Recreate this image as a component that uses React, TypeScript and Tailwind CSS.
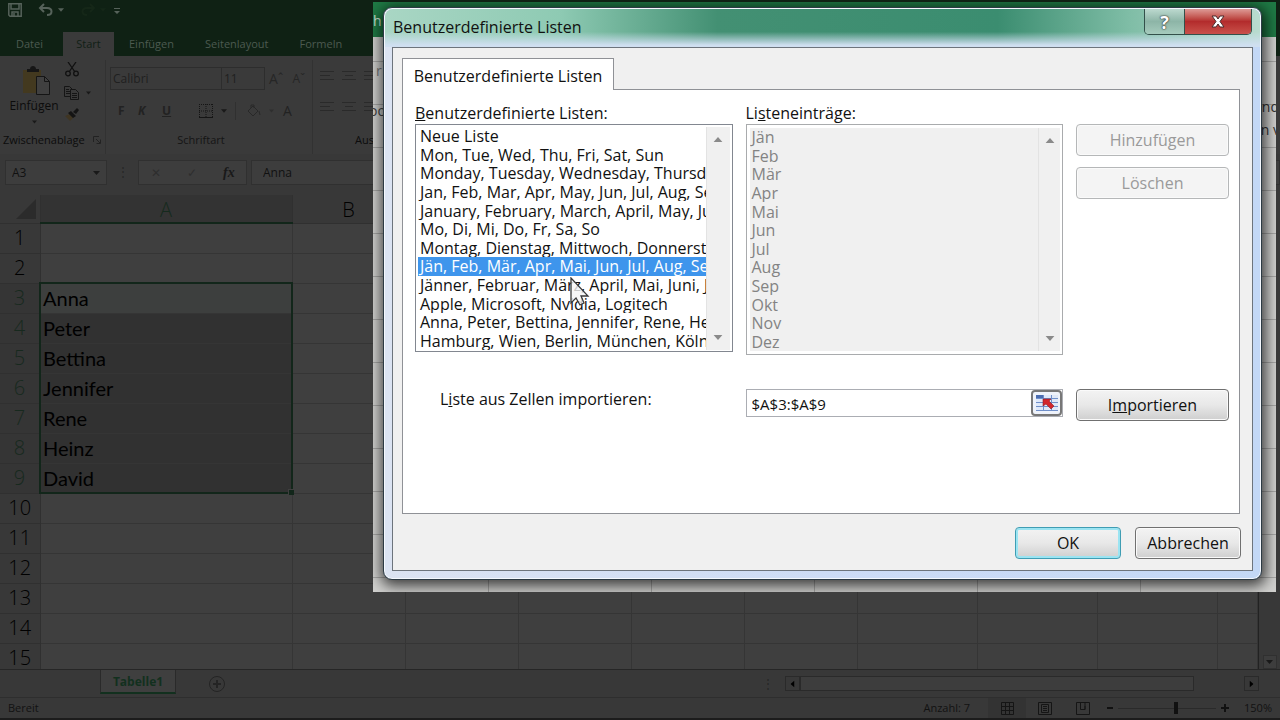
import { ReactNode } from "react";
import { twMerge } from "tailwind-merge";

const TABS = ["Einfügen", "Seitenlayout", "Formeln"];
// only the first two columns stay clear of the dialog
const COLUMNS = ["A", "B", "", "", "", "", "", "", "", ""];
const NAMES: Record<number, string> = {
  3: "Anna",
  4: "Peter",
  5: "Bettina",
  6: "Jennifer",
  7: "Rene",
  8: "Heinz",
  9: "David",
};
const LISTS = [
  "Neue Liste",
  "Mon, Tue, Wed, Thu, Fri, Sat, Sun",
  "Monday, Tuesday, Wednesday, Thursday",
  "Jan, Feb, Mar, Apr, May, Jun, Jul, Aug, Sep",
  "January, February, March, April, May, June",
  "Mo, Di, Mi, Do, Fr, Sa, So",
  "Montag, Dienstag, Mittwoch, Donnerstag",
  "Jän, Feb, Mär, Apr, Mai, Jun, Jul, Aug, Sep",
  "Jänner, Februar, März, April, Mai, Juni, Juli",
  "Apple, Microsoft, Nvidia, Logitech",
  "Anna, Peter, Bettina, Jennifer, Rene, Heinz",
  "Hamburg, Wien, Berlin, München, Köln",
];
const ENTRIES = ["Jän", "Feb", "Mär", "Apr", "Mai", "Jun", "Jul", "Aug", "Sep", "Okt", "Nov", "Dez"];

const Caret = ({ className }: { className?: string }) => (
  <svg viewBox="0 0 7 4" className={twMerge("h-1 w-[7px] fill-[#191919]", className)}>
    <path d="M0 0h7L3.5 4z" />
  </svg>
);

const TitleBar = () => (
  <div className="flex h-8 items-start gap-4 bg-[#0f2114] pl-2 pt-[3px] text-[#56625a]">
    <button aria-label="Speichern">
      <svg viewBox="0 0 14 14" className="h-[14px] w-[14px]" fill="none" stroke="currentColor" strokeWidth="1.5">
        <path d="M.8.8h12.4v12.4H2L.8 12zM3 1v5h8V1M4 13V9h6v4M6 10v3" />
      </svg>
    </button>
    <button aria-label="Rückgängig" className="flex items-center gap-1">
      <svg viewBox="0 0 16 14" className="h-[14px] w-4" fill="none" stroke="currentColor" strokeWidth="2">
        <path d="M2 5h7c6 0 6 7 0 7M6 1L2 5l4 4" />
      </svg>
      <Caret className="w-[6px] fill-[#56625a]" />
    </button>
    <button aria-label="Wiederholen" className="flex items-center gap-1 text-[#152718]">
      <svg viewBox="0 0 16 14" className="h-[14px] w-4" fill="none" stroke="currentColor" strokeWidth="2">
        <path d="M14 5H7c-6 0-6 7 0 7M10 1l4 4-4 4" />
      </svg>
      <Caret className="w-[6px] fill-[#152718]" />
    </button>
    <button aria-label="Symbolleiste anpassen" className="-ml-2 pt-[5px]">
      <svg viewBox="0 0 6 7" className="h-[7px] w-[6px]" fill="currentColor">
        <path d="M0 0h6v1H0zM0 3h6L3 6z" />
      </svg>
    </button>
  </div>
);

const RibbonTabs = () => (
  <nav className="flex h-6 items-center bg-[#0f2114] text-[11px] text-[#4c5a50]">
    <button className="w-[63px] pr-1">Datei</button>
    <button className="mr-[15px] h-6 w-[51px] bg-[#3a3a3a] text-[#111f16]">Start</button>
    {TABS.map((tab) => (
      <button key={tab} className="mr-[31px]">
        {tab}
      </button>
    ))}
  </nav>
);

const AlignIcon = ({ short }: { short?: boolean }) => (
  <svg viewBox="0 0 14 12" className="h-3 w-[14px]" stroke="#2a2a2a">
    <path d={short ? "M0 1.5h14M3 5.5h8M0 9.5h14" : "M0 1.5h14M0 5.5h10M0 9.5h14"} />
  </svg>
);

const Ribbon = () => (
  <section className="flex h-[98px] bg-[#3a3a3a] pt-1 text-[11px] text-[#0c0c0c]">
    <div className="flex w-[106px] flex-col justify-between border-r border-[#323232] pb-[6px]">
      <div className="flex">
        <button className="flex w-16 flex-col items-center pl-1 pt-1">
          <svg viewBox="0 0 30 32" className="ml-1 h-8 w-[30px]">
            <path d="M2 6h18v23H2z" fill="#43391f" />
            <path d="M6 8V5h3c0-4 6-4 6 0h3v3z" fill="#161616" />
            <path d="M15.5 12.5h8l5 5v13h-13z" fill="#404040" stroke="#151515" />
            <path d="M23.5 12.5v5h5" fill="none" stroke="#151515" />
          </svg>
          <span className="mt-[2px] text-xs leading-4">Einfügen</span>
          <Caret className="mt-[6px] w-[5px]" />
        </button>
        <div className="flex flex-col items-start gap-2">
          <button aria-label="Ausschneiden" className="pl-px pt-[2px]">
            <svg viewBox="0 0 14 15" className="h-[15px] w-[14px]" fill="none" stroke="#111" strokeWidth="1.3">
              <path d="M3 0l7 10M11 0L4 10" />
              <circle cx="3" cy="11.5" r="2.3" />
              <circle cx="11" cy="11.5" r="2.3" />
            </svg>
          </button>
          <button aria-label="Kopieren" className="flex items-center gap-[6px] pt-px">
            <svg viewBox="0 0 16 14" className="h-[14px] w-4" fill="#3a3a3a" stroke="#151515">
              <path d="M.5.5h5l3 3v7h-8zM2 3.5h3M2 5.5h4M2 7.5h4" />
              <path d="M6.5 3.5h5l3 3v7h-8zM8 7.5h5M8 9.5h5M8 11.5h5" />
            </svg>
            <Caret className="w-[5px]" />
          </button>
          <button aria-label="Format übertragen">
            <svg viewBox="0 0 15 13" className="h-[13px] w-[15px]">
              <path d="M1 8l5-2 4 3-4 4z" fill="#3f3522" />
              <path d="M4 5l3-2 5 5-3 2zM9 4l4-4 2 2-3 4z" fill="#141414" />
            </svg>
          </button>
        </div>
      </div>
      <div className="flex items-center justify-between pl-[3px] pr-1">
        Zwischenablage
        <svg viewBox="0 0 8 8" className="h-2 w-2" fill="none" stroke="#222">
          <path d="M.5 6V.5H6M3 3l4 4M7.5 3.5v4h-4" />
        </svg>
      </div>
    </div>
    <div className="flex w-[207px] flex-col justify-between border-r border-[#323232] pb-[6px] pl-1">
      <div className="mt-[7px] flex items-center text-[#202020]">
        <input
          aria-label="Schriftart"
          defaultValue="Calibri"
          className="h-[23px] w-[112px] border border-[#2d2d2d] bg-transparent pl-[2px] text-xs"
        />
        <input
          aria-label="Schriftgrad"
          defaultValue="11"
          className="h-[23px] w-[43px] border border-l-0 border-[#2d2d2d] bg-transparent pl-[2px] text-xs"
        />
        <button className="ml-1 text-sm leading-4 text-[#262626]">Aˆ</button>
        <button className="ml-[9px] text-xs leading-4 text-[#262626]">Aˇ</button>
      </div>
      <div className="flex items-center pl-2 text-xs text-[#222]">
        <button className="w-5 text-left font-bold">F</button>
        <button className="w-6 text-left font-bold italic">K</button>
        <button className="w-[37px] text-left font-bold underline">U</button>
        <button aria-label="Rahmen" className="flex items-center gap-2">
          <svg viewBox="0 0 14 14" className="h-[14px] w-[14px]" fill="none" stroke="#151515">
            <path d="M.5 0v13M13.5 0v13M7 0v13M0 .5h14M0 7h14" strokeDasharray="1 1" />
            <path d="M0 13.5h14" />
          </svg>
          <Caret className="w-[6px]" />
        </button>
        <button aria-label="Füllfarbe" className="ml-2 flex h-[18px] items-center gap-2 border-l border-[#303030] pl-[11px]">
          <svg viewBox="0 0 14 13" className="h-[13px] w-[14px]" fill="none" stroke="#282828">
            <path d="M1 7l5-5 5 5-5 5zM4 4V1h3v3M12 7l1 4" />
          </svg>
          <Caret className="w-[5px] fill-[#2e2e2e]" />
        </button>
        <button className="ml-[9px] text-sm leading-4">A</button>
      </div>
      <div className="pr-5 text-center text-[#151515]">Schriftart</div>
    </div>
    <div className="flex flex-col justify-between pb-[6px] pl-[7px]">
      <div className="mt-[10px] flex gap-2">
        <AlignIcon />
        <AlignIcon short />
        <AlignIcon />
      </div>
      <div className="flex gap-2">
        <AlignIcon />
        <AlignIcon short />
        <AlignIcon />
      </div>
      <div className="pl-[35px]">Ausrichtung</div>
    </div>
  </section>
);

const FormulaBar = () => (
  <div className="flex h-[41px] items-start bg-[#383838] pl-[5px] pt-[6px] text-xs text-[#111]">
    <div className="flex h-[25px] w-[102px] items-center border border-[#303030] bg-[#3d3d3d] pl-[6px] pr-[6px]">
      <input aria-label="Namenfeld" defaultValue="A3" className="w-full min-w-0 bg-transparent outline-none" />
      <Caret className="shrink-0" />
    </div>
    <span className="w-[31px] pt-1 text-center text-[#262626]">⋮</span>
    <div className="flex h-[25px] w-[109px] items-center border border-[#303030] bg-[#3d3d3d]">
      <button aria-label="Abbrechen" className="ml-3 text-[#2e2e2e]">✕</button>
      <button aria-label="Eingeben" className="ml-[26px] text-[#2e2e2e]">✓</button>
      <button className="ml-[26px] font-['Liberation_Serif',serif] text-sm font-bold italic text-[#191919]">fx</button>
    </div>
    <input
      aria-label="Bearbeitungsleiste"
      defaultValue="Anna"
      className="ml-1 h-[25px] flex-1 border border-[#303030] bg-[#3d3d3d] pl-[11px]"
    />
  </div>
);

const Sheet = () => (
  <div className="flex min-h-0 flex-1 bg-[#383838]">
    <div className="min-w-0 flex-1 overflow-hidden border-r border-[#222]">
      <table className="w-full table-fixed border-collapse text-xl">
        <colgroup>
          <col className="w-10" />
          <col className="w-[252px]" />
          <col className="w-[113px]" />
          <col className="w-[113px]" />
          <col className="w-[113px]" />
          <col className="w-[113px]" />
          <col className="w-[113px]" />
          <col className="w-[120px]" />
          <col className="w-[120px]" />
          <col className="w-[120px]" />
          <col />
        </colgroup>
        <thead>
          <tr className="h-7 leading-6">
            <th className="border-b border-r border-[#303030] p-0">
              <svg viewBox="0 0 20 20" className="ml-4 h-5 w-5 fill-[#2b2b2b]">
                <path d="M20 0v20H0z" />
              </svg>
            </th>
            {COLUMNS.map((col, i) => (
              <th
                key={i}
                className={twMerge(
                  "border-b border-r border-[#303030] p-0 pt-[3px] font-light text-black",
                  col === "A" && "border-b-2 border-b-[#12261a] bg-[#333] text-[#152a1d]"
                )}
              >
                {col}
              </th>
            ))}
          </tr>
        </thead>
        <tbody>
          {Array.from({ length: 15 }, (_, i) => i + 1).map((row) => {
            const selected = row >= 3 && row <= 9;
            return (
              <tr key={row} className="h-[30px] leading-7">
                <th
                  className={twMerge(
                    "border-b border-r border-[#303030] p-0 font-light text-black",
                    selected && "border-r-2 border-r-[#12261a] bg-[#353535] text-[#17291e]"
                  )}
                >
                  {row}
                </th>
                {COLUMNS.map((col, i) => (
                  <td
                    key={i}
                    className={twMerge(
                      "border-b border-r border-[#353535] bg-[#3f3f3f] p-0 font-[Lato,'Liberation_Sans',sans-serif] text-black",
                      col === "A" && selected && "relative border-r-2 border-r-[#12261a] bg-[#313131] pl-[2px]",
                      col === "A" && row === 2 && "border-b-2 border-b-[#12261a]",
                      col === "A" && row === 3 && "bg-[#3d3f3e]",
                      col === "A" && row === 9 && "border-b-2 border-b-[#12261a]"
                    )}
                  >
                    {col === "A" && NAMES[row]}
                    {col === "A" && row === 9 && (
                      <span className="absolute -bottom-[3px] -right-[3px] h-[6px] w-[6px] border-l border-t border-[#3f3f3f] bg-[#12261a]" />
                    )}
                  </td>
                ))}
              </tr>
            );
          })}
        </tbody>
      </table>
    </div>
    <div className="flex w-[21px] flex-col items-center justify-end">
      <button aria-label="Nach unten" className="flex h-[14px] w-[14px] items-center justify-center border border-[#303030] bg-[#3d3d3d]">
        <Caret />
      </button>
    </div>
  </div>
);

const SheetTabs = () => (
  <div className="flex h-7 items-center border-t border-[#262626] bg-[#383838]">
    <button className="ml-[100px] h-6 w-[76px] self-start border-x border-b-2 border-[#2a2a2a] border-b-[#12301e] bg-[#3f3f3f] pt-[2px] text-xs font-bold text-[#12301e]">
      Tabelle1
    </button>
    <button aria-label="Neues Blatt" className="ml-8">
      <svg viewBox="0 0 18 18" className="h-[18px] w-[18px]" fill="none" stroke="#242424">
        <circle cx="9" cy="9" r="7.5" />
        <path d="M9 5v8M5 9h8" strokeWidth="2" />
      </svg>
    </button>
    <span className="ml-auto mr-[11px] text-xs text-[#262626]">⋮</span>
    <div className="mr-[21px] flex h-[15px] w-[474px]">
      <button aria-label="Nach links" className="flex w-[15px] items-center justify-center border border-[#2a2a2a]">
        <Caret className="rotate-90 fill-black" />
      </button>
      <div className="w-[394px] border border-[#2a2a2a] bg-[#3d3d3d]" />
      <button aria-label="Nach rechts" className="ml-auto flex w-[15px] items-center justify-center border border-[#2a2a2a]">
        <Caret className="-rotate-90 fill-black" />
      </button>
    </div>
  </div>
);

const StatusBar = () => (
  <footer className="flex h-[23px] items-center border-b-2 border-t border-b-[#1c1c1c] border-t-[#2e2e2e] bg-[#383838] px-2 text-[11px] text-[#121212]">
    <span>Bereit</span>
    <span className="ml-auto mr-[18px]">Anzahl: 7</span>
    <button aria-label="Normal" className="flex h-full w-[38px] items-center justify-center bg-[#333]">
      <svg viewBox="0 0 13 13" className="h-[13px] w-[13px]" fill="none" stroke="#151515">
        <path d="M.5.5h12v12H.5zM4.5 0v13M8.5 0v13M0 4.5h13M0 8.5h13" />
      </svg>
    </button>
    <button aria-label="Seitenlayout" className="flex w-[38px] justify-center">
      <svg viewBox="0 0 14 13" className="h-[13px] w-[14px]" fill="none" stroke="#151515">
        <path d="M.5.5h13v12H.5zM3.5 2.5h7v8h-7zM5 4.5h4M5 6.5h4M5 8.5h4" />
      </svg>
    </button>
    <button aria-label="Umbruchvorschau" className="flex w-[38px] justify-center">
      <svg viewBox="0 0 14 13" className="h-[13px] w-[14px]" fill="none" stroke="#151515">
        <path d="M.5.5h13v12H.5zM4.5 0v7.5H9V0M9 7.5V4" />
      </svg>
    </button>
    <button aria-label="Verkleinern" className="ml-[5px] h-[2px] w-[6px] bg-[#111]" />
    <input
      type="range"
      aria-label="Zoom"
      defaultValue={60}
      className="mx-[5px] h-3 w-[98px] appearance-none bg-[linear-gradient(#2a2a2a,#2a2a2a)] bg-[length:100%_1px] bg-center bg-no-repeat [&::-webkit-slider-thumb]:h-3 [&::-webkit-slider-thumb]:w-1 [&::-webkit-slider-thumb]:appearance-none [&::-webkit-slider-thumb]:bg-[#111]"
    />
    <button aria-label="Vergrößern">
      <svg viewBox="0 0 8 8" className="h-2 w-2" stroke="#111" strokeWidth="2">
        <path d="M4 0v8M0 4h8" />
      </svg>
    </button>
    <span className="ml-[15px]">150%</span>
  </footer>
);

interface IDialogButtonProps {
  children: ReactNode;
  className?: string;
  disabled?: boolean;
}

const DialogButton = ({ children, className, disabled }: IDialogButtonProps) => (
  <button
    disabled={disabled}
    className={twMerge(
      "h-8 rounded-[4px] border border-[#707070] bg-linear-to-b from-[#f3f3f3] via-[#e8e8e8] via-50% to-[#cfcfcf] shadow-[inset_0_0_0_1px_#fafafa]",
      disabled && "border-[#b5b7b8] bg-[#f4f4f4] bg-none text-[#9a9a9a]",
      className
    )}
  >
    {children}
  </button>
);

interface IListBoxProps {
  items: string[];
  labelledBy: string;
  selected?: number;
  disabled?: boolean;
}

const ListBox = ({ items, labelledBy, selected, disabled }: IListBoxProps) => (
  <div
    className={twMerge(
      "flex border border-[#828790] bg-white p-[2px] pb-px",
      disabled && "border-[#a9abad] p-[3px] pr-[2px]"
    )}
  >
    <ul
      role="listbox"
      aria-labelledby={labelledBy}
      aria-disabled={disabled}
      className={twMerge(
        "grid h-[223px] min-w-0 flex-1 grid-cols-1 grid-rows-12 overflow-hidden",
        disabled && "bg-[#f0f0f0] text-[#838383]"
      )}
    >
      {items.map((item, i) => (
        <li
          key={item}
          role="option"
          aria-selected={i === selected}
          className={twMerge(
            "flex min-h-0 items-center overflow-hidden whitespace-nowrap pl-[2px] leading-[18px]",
            i === selected && "bg-[#3e95ec] text-white"
          )}
        >
          {item}
        </li>
      ))}
    </ul>
    <div
      className={twMerge(
        "flex w-6 flex-col items-center justify-between border-l border-[#e3e3e3] bg-[#f0f0f0] py-[10px]",
        disabled && "w-[22px]"
      )}
    >
      <Caret className="h-[5px] w-[10px] rotate-180 fill-[#8a8a8a]" />
      <Caret className="h-[5px] w-[10px] fill-[#8a8a8a]" />
    </div>
  </div>
);

const Pointer = () => (
  <svg viewBox="0 0 20 29" className="pointer-events-none absolute left-[186px] top-[269px] h-[29px] w-5">
    <path d="M1 1v25l5-5 4 7 4-2-3-7h7z" fill="#f5f5f5" fillOpacity=".8" stroke="#3a3a3a" strokeWidth="1.3" />
  </svg>
);

const Dialog = () => (
  <div
    role="dialog"
    aria-labelledby="dialog-title"
    className="relative flex flex-col rounded-[9px] border border-[#2c3a44] bg-[#c9daf3] bg-linear-to-r from-[#dbe3f2] via-[#cddcf5] to-[#c3d8f6] px-2 pb-2 text-base text-[#111] shadow-[inset_0_0_0_1px_#f4f8fd,1px_3px_14px_3px_rgba(0,0,0,0.7)]"
  >
    <header className="-mx-[7px] mt-px flex h-[38px] items-start rounded-t-[8px] bg-[linear-gradient(to_bottom,transparent_60%,#cfdff0_95%),linear-gradient(to_right,#a9d6c4,#8ecab3_20%,#439073_38%,#3b8d70_70%,#7fbda6_85%,#b9dccf)] pl-2 pr-2">
      <h1 id="dialog-title" className="flex-1 pt-2 leading-5">
        Benutzerdefinierte Listen
      </h1>
      <div className="flex h-[26px] overflow-hidden rounded-b-[5px] border border-t-0 border-[#33504a] font-bold text-white">
        <button
          aria-label="Hilfe"
          className="flex w-10 items-center justify-center border-r border-[#33504a] bg-linear-to-b from-[#bcd9cf] via-[#8db5a7] via-50% to-[#a6cbbd]"
        >
          <span className="text-lg leading-5 [text-shadow:0_0_2px_#222,0_0_1px_#222]">?</span>
        </button>
        <button
          aria-label="Schließen"
          className="flex w-[66px] items-center justify-center bg-linear-to-b from-[#dd9a97] via-[#b32b2c] via-50% to-[#c9504a]"
        >
          <svg viewBox="0 0 16 13" className="h-[13px] w-4" fill="#fff" stroke="#4a2d2d">
            <path d="M2 1h4l2 3 2-3h4l-4 5.500L14 12h-4L8 9l-2 3H2l4-5.500z" />
          </svg>
        </button>
      </div>
    </header>
    <div className="border border-[#6d747c] bg-[#f0f0f0] pb-[11px] pl-[9px] pr-3 pt-[10px]">
      <button
        role="tab"
        aria-selected="true"
        className="relative -mb-px block h-8 w-[212px] border border-b-0 border-[#8f9196] bg-white pt-[2px]"
      >
        Benutzerdefinierte Listen
      </button>
      <div
        role="tabpanel"
        className="grid min-h-[425px] grid-cols-[1fr_1fr_153px] grid-rows-[auto_auto_1fr] gap-x-[13px] border border-[#8f9196] bg-white pl-3 pr-[10px] pt-[13px]"
      >
        <span id="lists-label" className="mb-px leading-5">
          <u>B</u>enutzerdefinierte Listen:
        </span>
        <span id="entries-label" className="mb-px leading-5">
          Li<u>s</u>teneinträge:
        </span>
        <span />
        <div className="self-start">
          <ListBox items={LISTS} labelledBy="lists-label" selected={7} />
        </div>
        <ListBox items={ENTRIES} labelledBy="entries-label" disabled />
        <div className="flex flex-col gap-[11px]">
          <DialogButton disabled>Hinzufügen</DialogButton>
          <DialogButton disabled>Löschen</DialogButton>
        </div>
        <label htmlFor="range" className="mt-[34px] pl-[25px] leading-5">
          L<u>i</u>ste aus Zellen importieren:
        </label>
        <div className="mt-[34px] flex h-7 border border-[#abadb3]">
          <input
            id="range"
            defaultValue="$A$3:$A$9"
            className="min-w-0 flex-1 pl-[5px] pt-[2px] text-[15px] outline-none"
          />
          <button
            aria-label="Bereich auswählen"
            className="flex w-[31px] items-center justify-center rounded-[4px] border-2 border-[#777] bg-[#eef2fa]"
          >
            <svg viewBox="0 0 22 18" className="h-[18px] w-[22px]">
              <path d="M0 1h22v16H0z" fill="#dfe8f8" />
              <path d="M0 1h7v3H0z" fill="#4a6cb0" />
              <path d="M0 4.5h22M0 8.5h22M0 12.5h22M0 16.5h22M7.5 1v16M15.5 1v16" stroke="#6f8fca" />
              <path d="M7 5l8 0-2 2 5 5-3 3-5-5-3 2z" fill="#d2262c" stroke="#8d1c28" strokeWidth=".6" />
            </svg>
          </button>
        </div>
        <DialogButton className="mt-[34px]">
          I<u>m</u>portieren
        </DialogButton>
      </div>
      <div className="-mr-px mt-[13px] flex justify-end gap-[14px]">
        <DialogButton className="w-[106px] border-[#3f9db3] shadow-[inset_0_0_0_2px_#9be4f2]">OK</DialogButton>
        <DialogButton className="w-[106px]">Abbrechen</DialogButton>
      </div>
    </div>
    <Pointer />
  </div>
);

export default function App() {
  return (
    <div className="relative flex h-screen flex-col overflow-hidden bg-[#383838] font-['Open_Sans','Noto_Sans',sans-serif]">
      <TitleBar />
      <RibbonTabs />
      <Ribbon />
      <FormulaBar />
      <Sheet />
      <SheetTabs />
      <StatusBar />
      {/* bright area around the dialog, the window behind it shows at the edges */}
      <div className="absolute left-[373px] right-1 top-[2px] overflow-hidden bg-[#d0d0ce] pb-3 pl-[10px] pr-[14px] pt-[5px]">
        <div className="absolute inset-0 bg-[linear-gradient(#0003_1px,transparent_1px),linear-gradient(to_right,#0003_1px,transparent_1px)] bg-[length:100%_43px,163px_100%] bg-[position:0_16px,115px_0]" />
        <div className="absolute inset-x-0 top-0 h-[35px] bg-[#1f7a45]" />
        <span className="absolute left-0 top-[9px] text-sm leading-5 text-[#cfe5d8]">h</span>
        <span className="absolute left-[3px] top-[59px] text-sm leading-5 text-[#777]">r</span>
        <span className="absolute -left-1 top-[99px] text-sm leading-5 text-[#444]">oo</span>
        <span className="absolute -right-[3px] top-[95px] text-sm leading-5 text-[#333]">nd</span>
        <span className="absolute -right-1 top-[118px] text-sm leading-5 text-[#333]">n v</span>
        <Dialog />
      </div>
    </div>
  );
}
